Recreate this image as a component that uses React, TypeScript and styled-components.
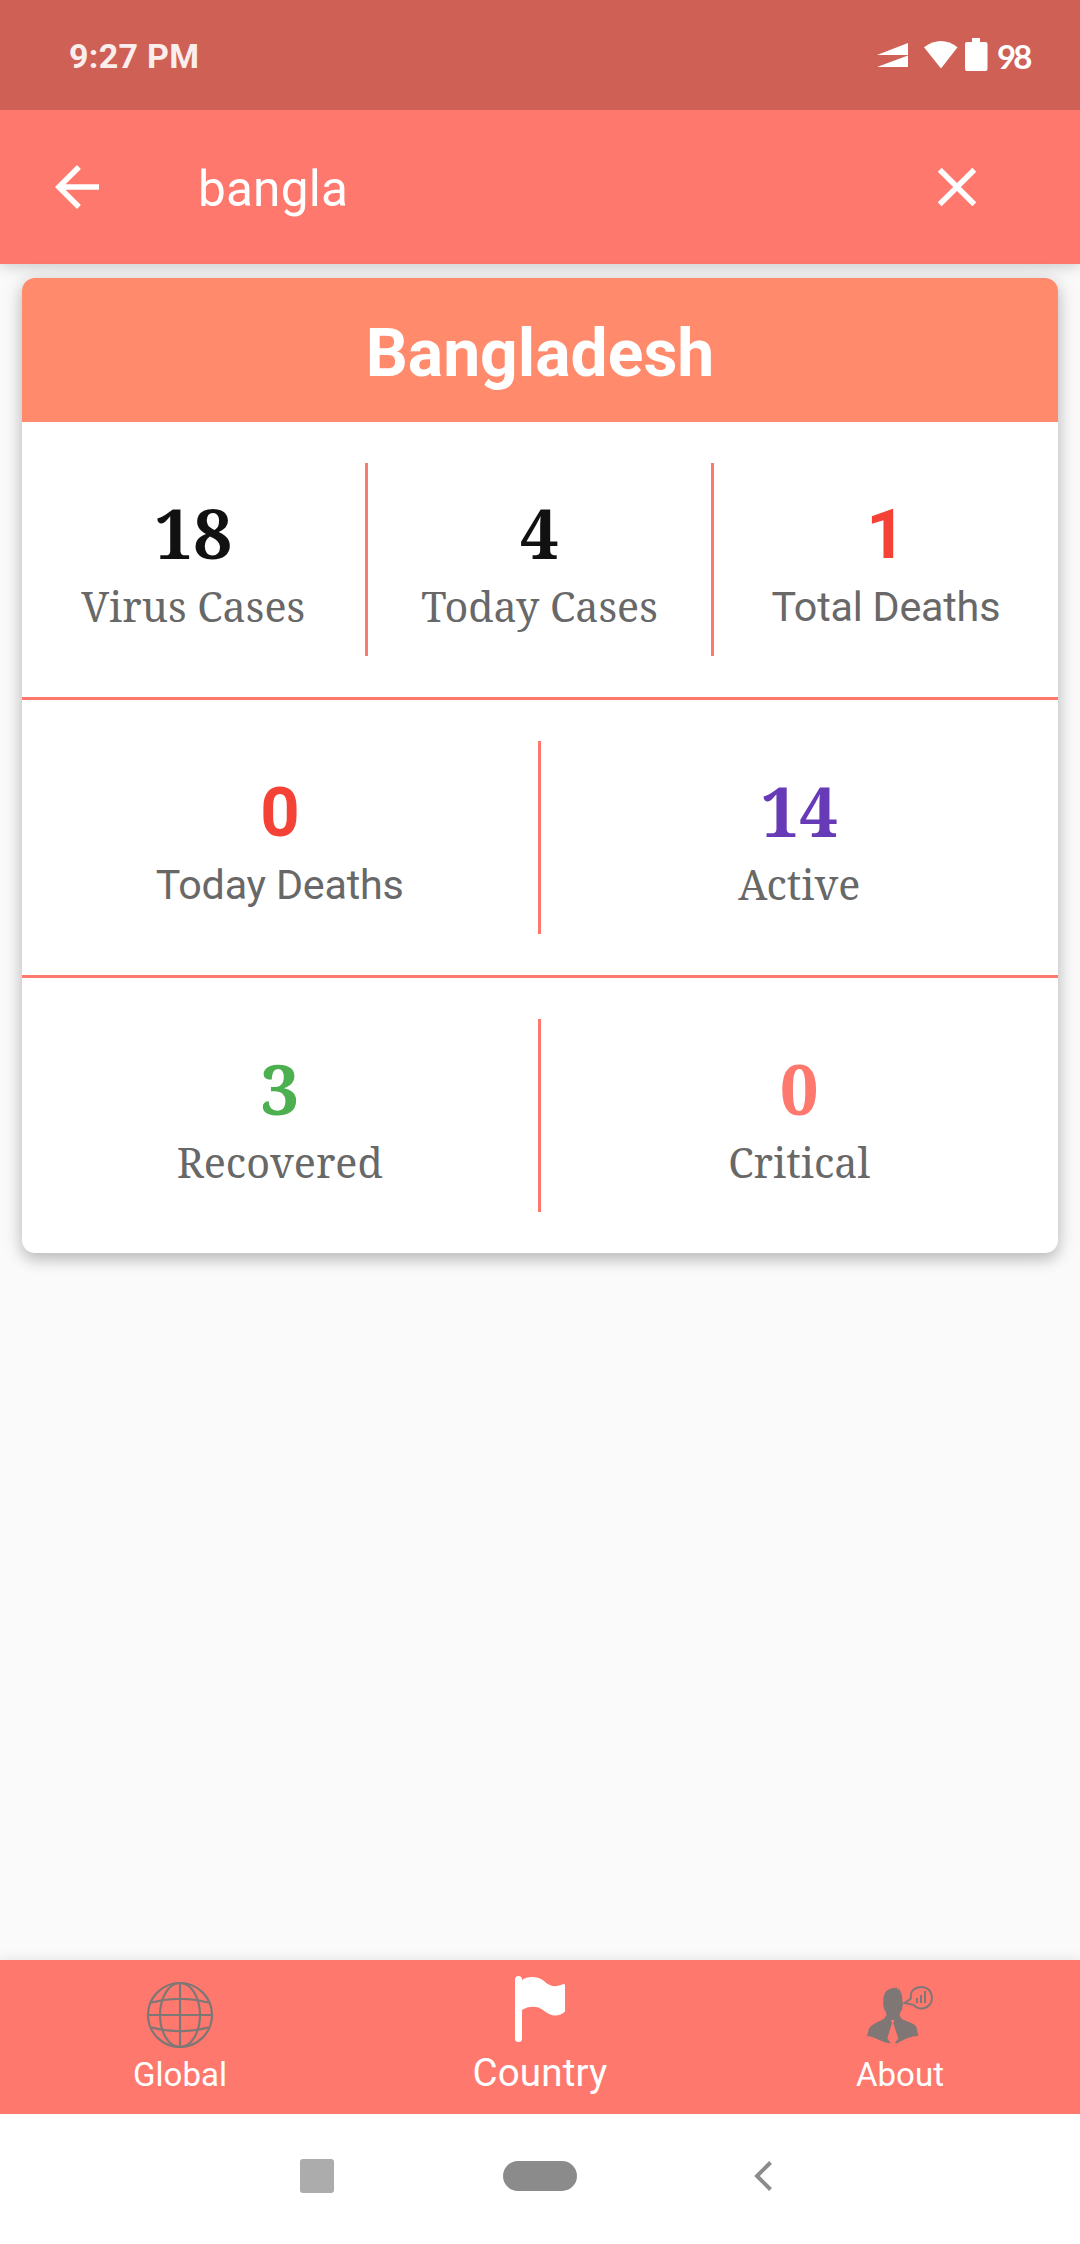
import React from "react";
import styled, { createGlobalStyle } from "styled-components";

const CORAL = "#ff786d";

const GlobalStyle = createGlobalStyle`
  * { box-sizing: border-box; }
  body { margin: 0; background: #fafafa; font-family: Roboto, "Liberation Sans", sans-serif; }
`;

const Screen = styled.div`
  display: flex;
  flex-direction: column;
  width: 1080px;
  height: 2244px;
  background: #fafafa;
  overflow: hidden;
`;

const StatusBar = styled.header`
  position: relative;
  z-index: 1;
  display: flex;
  align-items: center;
  flex: none;
  height: 110px;
  padding: 0 47px 0 69px;
  background: #cf6056;
`;

const Clock = styled.span`
  flex: 1;
  padding-top: 1px;
  color: #faeeed;
  font-size: 34px;
  font-weight: 700;
  letter-spacing: 0.3px;
  line-height: 44px;
  white-space: nowrap;
`;

const StatusIcons = styled.svg`
  flex: none;
  display: block;
`;

const BatteryLevel = styled.span`
  padding: 2px 0 0 9px;
  width: 45px;
  color: #fff;
  font-family: Lato, sans-serif;
  font-size: 33px;
  font-weight: 700;
  letter-spacing: -3px;
  line-height: 44px;
`;

const SearchBar = styled.div`
  display: flex;
  align-items: center;
  flex: none;
  height: 154px;
  padding: 0 90px 0 44px;
  background: ${CORAL};
  box-shadow: 0 2px 14px rgba(0, 0, 0, 0.2);
`;

const Query = styled.span`
  flex: 1;
  padding: 4px 0 0 88px;
  color: #fff;
  font-size: 49.5px;
  letter-spacing: 0.2px;
  line-height: 64px;
`;

const Content = styled.main`
  flex: 1;
  padding: 14px 22px 0;
`;

const Card = styled.section`
  border-radius: 13px;
  background: #fff;
  box-shadow: 0 7px 14px rgba(0, 0, 0, 0.17), 0 2px 22px rgba(0, 0, 0, 0.14);
`;

const CardTitle = styled.h1`
  margin: 0;
  height: 144px;
  padding-top: 7px;
  border-radius: 13px 13px 0 0;
  background: #ff8a6c;
  color: #fff;
  font-size: 66px;
  font-weight: 700;
  line-height: 137px;
  text-align: center;
`;

const StatRow = styled.div`
  display: flex;
  align-items: center;
  height: 275px;
`;

const RowLine = styled.div`
  height: 3px;
  background: ${CORAL};
`;

const ColumnLine = styled.div`
  flex: none;
  width: 3px;
  height: 193px;
  margin: 0 0.6px 0 -0.6px;
  background: ${CORAL};
`;

const StatCell = styled.div<{ $serif: boolean }>`
  flex: 1 1 0;
  display: flex;
  flex-direction: column;
  align-items: center;
  gap: ${(p) => (p.$serif ? 9 : 8)}px;
  padding: ${(p) => (p.$serif ? 3 : 6)}px 1px 0 0;
  font-family: ${(p) =>
    p.$serif ? '"Noto Serif", "DejaVu Serif Condensed", "DejaVu Serif", serif' : "Roboto, sans-serif"};
  letter-spacing: ${(p) => (p.$serif ? 0 : -0.2)}px;
`;

const StatValue = styled.strong<{ $color: string }>`
  color: ${(p) => p.$color};
  font-size: 68.75px;
  font-weight: 700;
  line-height: 80px;
`;

const StatLabel = styled.span`
  color: #686868;
  font-size: 41.25px;
  line-height: 48px;
  white-space: nowrap;
`;

const TabBar = styled.nav`
  display: flex;
  flex: none;
  height: 154px;
  background: ${CORAL};
  box-shadow: 0 0 12px rgba(0, 0, 0, 0.1);
`;

const Tab = styled.div<{ $active?: boolean }>`
  flex: 1;
  display: flex;
  flex-direction: column;
  align-items: center;
  padding-top: ${(p) => (p.$active ? 13 : 19)}px;
  gap: ${(p) => (p.$active ? 6 : 2)}px;
  color: #fff;
  font-size: ${(p) => (p.$active ? 38.5 : 33)}px;
  letter-spacing: ${(p) => (p.$active ? 0.2 : 0)}px;
  line-height: 44px;
`;

const TabIcon = styled.svg`
  display: block;
  flex: none;
`;

const SystemNav = styled.footer`
  display: flex;
  align-items: center;
  flex: none;
  height: 130px;
  padding: 0 307px 6px 300px;
  justify-content: space-between;
  background: #fff;
`;

const RecentsButton = styled.div`
  width: 34px;
  height: 34px;
  border-radius: 3px;
  background: #acacac;
`;

const HomeButton = styled.div`
  width: 74px;
  height: 30px;
  margin-right: 7px;
  border-radius: 15px;
  background: #8b8b8b;
`;

type Stat = { value: string; label: string; color: string; serif: boolean };

const ROWS: Stat[][] = [
  [
    { value: "18", label: "Virus Cases", color: "#111", serif: true },
    { value: "4", label: "Today Cases", color: "#111", serif: true },
    { value: "1", label: "Total Deaths", color: "#f44336", serif: false },
  ],
  [
    { value: "0", label: "Today Deaths", color: "#f44336", serif: false },
    { value: "14", label: "Active", color: "#673ab7", serif: true },
  ],
  [
    { value: "3", label: "Recovered", color: "#4caf50", serif: true },
    { value: "0", label: "Critical", color: CORAL, serif: true },
  ],
];

const GREY = "#7e7776";

export default function App() {
  return (
    <>
      <GlobalStyle />
      <Screen>
        <StatusBar>
          <Clock>9:27 PM</Clock>
          <StatusIcons width="112" height="40" viewBox="876 35 112 40" fill="#fff">
            <path d="M877 55L908 43V55ZM877 67L908 55.5V67Z" />
            <path d="M924 47.2Q941 34.8 957.5 47.2L941 68.5Z" />
            <path d="M972 38H980V42H985.5Q987.5 42 987.5 44V69Q987.5 71 985.5 71H967Q965 71 965 69V44Q965 42 967 42H972Z" />
          </StatusIcons>
          <BatteryLevel>98</BatteryLevel>
        </StatusBar>
        <SearchBar>
          <TabIcon width="66" height="66" viewBox="0 0 24 24" fill="#fff">
            <path d="M20 11H7.83l5.59-5.59L12 4l-8 8 8 8 1.41-1.41L7.83 13H20v-2z" />
          </TabIcon>
          <Query>bangla</Query>
          <TabIcon width="66" height="66" viewBox="0 0 24 24" fill="#fff">
            <path d="M19 6.41L17.59 5 12 10.59 6.41 5 5 6.41 10.59 12 5 17.59 6.41 19 12 13.41 17.59 19 19 17.59 13.41 12z" />
          </TabIcon>
        </SearchBar>
        <Content>
          <Card>
            <CardTitle>Bangladesh</CardTitle>
            {ROWS.map((row, r) => (
              <React.Fragment key={r}>
                {r > 0 && <RowLine />}
                <StatRow>
                  {row.map((stat, i) => (
                    <React.Fragment key={stat.label}>
                      {i > 0 && <ColumnLine />}
                      <StatCell $serif={stat.serif}>
                        <StatValue $color={stat.color}>{stat.value}</StatValue>
                        <StatLabel>{stat.label}</StatLabel>
                      </StatCell>
                    </React.Fragment>
                  ))}
                </StatRow>
              </React.Fragment>
            ))}
          </Card>
        </Content>
        <TabBar>
          <Tab>
            <TabIcon width="72" height="72" viewBox="0 0 72 72" fill="none" stroke={GREY} strokeWidth="2.2">
              <circle cx="36" cy="36" r="32" />
              <ellipse cx="36" cy="36" rx="20" ry="32" />
              <path d="M36 4V68M4 36H68M7.5 23.5Q36 16 64.5 23.5M7.5 48.5Q36 56 64.5 48.5" />
            </TabIcon>
            Global
          </Tab>
          <Tab $active>
            <TabIcon width="72" height="72" viewBox="504 1973 72 72" fill="#fff">
              <rect x="515" y="1976" width="7" height="66" rx="3.5" />
              <path d="M522 1980C527 1976 538 1975.5 544 1981C550 1987 556 1987 561 1985Q564.8 1983 565 1985V2011.5C559 2017.5 550 2016.5 543 2010C538 2005.5 528 2005.5 522 2010Z" />
            </TabIcon>
            Country
          </Tab>
          <Tab>
            <TabIcon width="72" height="72" viewBox="864 1979 72 72" fill={GREY}>
              <path d="M883.5 2002C882.5 1993 887 1988 895 1988L897.5 1987.5L897 1989.5L899.5 1989C900 1991.5 902.5 1993 902.5 2002L903 2004L902 2009.5C900.5 2011.5 900 2013.5 899.5 2015L901.5 2018.8C906 2021.5 914 2023 916.5 2027L918.3 2036C911 2036 904 2039 897 2043.5L895 2043L898.3 2038.5L893.2 2023L894.5 2020H890.8L892 2023L887.3 2038.5L891 2043.5C883 2043 876 2037 867 2036L869 2028.5C872 2023.5 880 2021.5 884 2018.8L886.5 2015C886 2012.5 885.5 2011 884 2009L883 2003Z" />
              <path
                d="M904.5 2003L911 1998.5C909.5 1991 915 1987 921.5 1987C928 1987 932 1992 932 1998C932 2004 927 2008.5 921.5 2008.5C917 2008.5 915 2006.5 913.5 2004.8Z"
                fill="none"
                stroke={GREY}
                strokeWidth="1.9"
              />
              <path d="M916 1998H918V2003H916ZM920 1995H922V2003H920ZM924 1991H926V2003H924Z" />
            </TabIcon>
            About
          </Tab>
        </TabBar>
        <SystemNav>
          <RecentsButton />
          <HomeButton />
          <TabIcon width="20" height="34" viewBox="0 0 20 34" fill="none" stroke="#8c8c8c" strokeWidth="4">
            <path d="M17.5 3.5L4 17L17.5 30.5" />
          </TabIcon>
        </SystemNav>
      </Screen>
    </>
  );
}
